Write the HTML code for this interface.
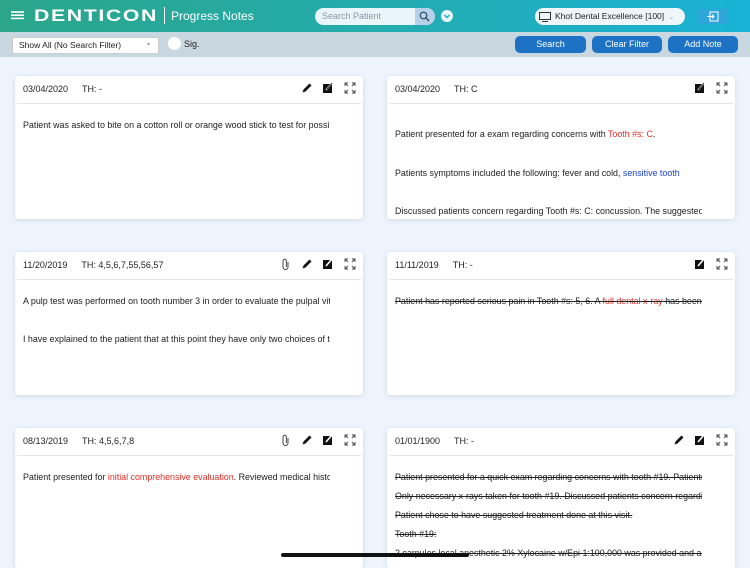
<!DOCTYPE html>
<html><head><meta charset="utf-8"><style>
*{box-sizing:border-box;margin:0;padding:0}
body{width:750px;height:562px;overflow:hidden;background:#eef4fc;font-family:"Liberation Sans",sans-serif;position:relative;color:#222}
.hdr{position:absolute;left:0;top:0;width:750px;height:32px;background:linear-gradient(90deg,#2ba68a 0%,#25aaa6 40%,#1ab2d6 100%)}
.tb{position:absolute;left:0;top:32px;width:750px;height:25px;background:#c9d7e0}
.abs{position:absolute}
.btn{position:absolute;top:36px;height:17px;background:#1d72c4;color:#fff;font-size:9px;border-radius:5px;text-align:center;line-height:17px}
.card{position:absolute;width:348px;height:143px;background:#fff;border-radius:3px;box-shadow:0 1px 4px rgba(120,140,170,.25);overflow:hidden}
.ch{position:absolute;left:8px;top:8px;font-size:9px;color:#222}
.ch span{margin-left:14px}
.dv{position:absolute;left:2px;right:2px;top:27px;height:1px;background:#e2e6ea}
.ic{position:absolute;top:6px}
.tx{position:absolute;left:8px;width:307px;font-size:8.9px;white-space:nowrap;overflow:hidden;color:#222}
.r{color:#e0302a}.b{color:#1a3fd0}.s{text-decoration:line-through}
</style></head><body>
<div class="hdr"></div>
<div class="abs" style="left:11px;top:11px;width:13px;height:2px;background:#fff;box-shadow:0 4px 0 #fff,0 8px 0 #fff;transform:scaleY(.8)"></div>
<div class="abs" style="left:34px;top:6px;color:#fff;font-size:17px;font-weight:bold;letter-spacing:1.3px;transform:scaleX(1.25);transform-origin:0 0">DENTICON</div>
<div class="abs" style="left:164px;top:7px;width:1px;height:17px;background:#fff"></div>
<div class="abs" style="left:171px;top:9px;color:#fff;font-size:12px">Progress Notes</div>
<div class="abs" style="left:315px;top:8px;width:120px;height:17px;background:#e9f5fb;border-radius:9px;font-size:9px;color:#8a98a6;line-height:17px;padding-left:7px">Search Patient</div>
<div class="abs" style="left:415px;top:8px;width:20px;height:17px;background:#b8cfe8;border-radius:0 9px 9px 0"></div>
<svg class="abs" style="left:419px;top:11px" width="11" height="11" viewBox="0 0 11 11"><circle cx="4.5" cy="4.5" r="3.3" fill="none" stroke="#2a4a6a" stroke-width="1.2"/><path d="M7 7l3 3" stroke="#2a4a6a" stroke-width="1.3"/></svg>
<div class="abs" style="left:441px;top:10px;width:12px;height:12px;border-radius:50%;background:#e8f4fb"></div>
<svg class="abs" style="left:443px;top:12px" width="8" height="8"><path d="M1.5 3l2.5 2.5L6.5 3" stroke="#1ab0cc" stroke-width="1.4" fill="none"/></svg>
<div class="abs" style="left:535px;top:8px;width:150px;height:17px;background:#eef6fa;border-radius:9px;font-size:8.5px;line-height:17px;padding-left:20px;color:#222">Khot Dental Excellence [100]</div>
<svg class="abs" style="left:539px;top:12px" width="12" height="10"><rect x="0.5" y="0.5" width="11" height="7" fill="none" stroke="#333"/><path d="M3 9.5h6" stroke="#333"/></svg>
<div class="abs" style="left:669px;top:14px;font-size:6px;color:#888">⌄</div>
<div class="abs" style="left:698px;top:9px;width:30px;height:15px;background:#2fa6da;border-radius:2px"></div>
<svg class="abs" style="left:707px;top:11px" width="12" height="11"><rect x="3" y="1" width="8" height="9" fill="none" stroke="#fff"/><path d="M0 5.5h7M5 3.5l2 2-2 2" stroke="#fff" fill="none"/></svg>
<div class="tb"></div>
<div class="abs" style="left:12px;top:37px;width:147px;height:17px;background:#fff;border:1px solid #ccc;font-size:8.5px;line-height:15px;padding-left:6px">Show All (No Search Filter)</div>
<div class="abs" style="left:147px;top:41px;font-size:6px;color:#999">▾</div>
<div class="abs" style="left:168px;top:37px;width:13px;height:13px;border-radius:50%;background:#fff"></div>
<div class="abs" style="left:184px;top:39px;font-size:9px">Sig.</div>
<div class="btn" style="left:515px;width:71px">Search</div>
<div class="btn" style="left:592px;width:70px">Clear Filter</div>
<div class="btn" style="left:668px;width:70px">Add Note</div>

<div class="card" style="left:15px;top:76px">
<div class="ch">03/04/2020<span>TH: -</span></div>
<svg class="ic" style="left:286px" width="12" height="12"><path d="M1.5 10.5l1-3 6-6 2 2-6 6z" fill="#111"/></svg>
<svg class="ic" style="left:307px" width="12" height="12"><rect x="1" y="2" width="9" height="9" fill="#111"/><path d="M4 8l6-7" stroke="#fff" stroke-width="1.6"/><path d="M4.5 7.5l5.5-6.5" stroke="#111" stroke-width=".8"/></svg>
<svg class="ic" style="left:329px" width="12" height="12"><path d="M1 4V1h3M8 1h3v3M11 8v3H8M4 11H1V8M1 1l3 3M11 1L8 4M11 11L8 8M1 11l3-3" stroke="#444" fill="none" stroke-width=".9"/></svg>
<div class="dv"></div>
<div class="tx" style="top:44px">Patient was asked to bite on a cotton roll or orange wood stick to test for possible cracked tooth</div>
</div>

<div class="card" style="left:387px;top:76px">
<div class="ch">03/04/2020<span>TH: C</span></div>
<svg class="ic" style="left:307px" width="12" height="12"><rect x="1" y="2" width="9" height="9" fill="#111"/><path d="M4 8l6-7" stroke="#fff" stroke-width="1.6"/><path d="M4.5 7.5l5.5-6.5" stroke="#111" stroke-width=".8"/></svg>
<svg class="ic" style="left:329px" width="12" height="12"><path d="M1 4V1h3M8 1h3v3M11 8v3H8M4 11H1V8M1 1l3 3M11 1L8 4M11 11L8 8M1 11l3-3" stroke="#444" fill="none" stroke-width=".9"/></svg>
<div class="dv"></div>
<div class="tx" style="top:53px">Patient presented for a exam regarding concerns with <span class="r">Tooth #s: C</span>.</div>
<div class="tx" style="top:92px">Patients symptoms included the following: fever and cold, <span class="b">sensitive tooth</span></div>
<div class="tx" style="top:130px">Discussed patients concern regarding Tooth #s: C: concussion. The suggested treatment</div>
</div>

<div class="card" style="left:15px;top:252px">
<div class="ch">11/20/2019<span>TH: 4,5,6,7,55,56,57</span></div>
<svg class="ic" style="left:265px" width="12" height="12"><path d="M8 4v5a2.5 2.5 0 0 1-5 0V3a1.7 1.7 0 0 1 3.4 0v6" stroke="#444" fill="none"/></svg>
<svg class="ic" style="left:286px" width="12" height="12"><path d="M1.5 10.5l1-3 6-6 2 2-6 6z" fill="#111"/></svg>
<svg class="ic" style="left:307px" width="12" height="12"><rect x="1" y="2" width="9" height="9" fill="#111"/><path d="M4 8l6-7" stroke="#fff" stroke-width="1.6"/></svg>
<svg class="ic" style="left:329px" width="12" height="12"><path d="M1 4V1h3M8 1h3v3M11 8v3H8M4 11H1V8M1 1l3 3M11 1L8 4M11 11L8 8M1 11l3-3" stroke="#444" fill="none" stroke-width=".9"/></svg>
<div class="dv"></div>
<div class="tx" style="top:44px">A pulp test was performed on tooth number 3 in order to evaluate the pulpal vitality</div>
<div class="tx" style="top:82px">I have explained to the patient that at this point they have only two choices of treatment</div>
</div>

<div class="card" style="left:387px;top:252px">
<div class="ch">11/11/2019<span>TH: -</span></div>
<svg class="ic" style="left:307px" width="12" height="12"><rect x="1" y="2" width="9" height="9" fill="#111"/><path d="M4 8l6-7" stroke="#fff" stroke-width="1.6"/></svg>
<svg class="ic" style="left:329px" width="12" height="12"><path d="M1 4V1h3M8 1h3v3M11 8v3H8M4 11H1V8M1 1l3 3M11 1L8 4M11 11L8 8M1 11l3-3" stroke="#444" fill="none" stroke-width=".9"/></svg>
<div class="dv"></div>
<div class="tx s" style="top:44px">Patient has reported serious pain in Tooth #s: 5, 6. A <span class="r">full dental x-ray</span> has been ordered</div>
</div>

<div class="card" style="left:15px;top:428px;height:140px">
<div class="ch">08/13/2019<span>TH: 4,5,6,7,8</span></div>
<svg class="ic" style="left:265px" width="12" height="12"><path d="M8 4v5a2.5 2.5 0 0 1-5 0V3a1.7 1.7 0 0 1 3.4 0v6" stroke="#444" fill="none"/></svg>
<svg class="ic" style="left:286px" width="12" height="12"><path d="M1.5 10.5l1-3 6-6 2 2-6 6z" fill="#111"/></svg>
<svg class="ic" style="left:307px" width="12" height="12"><rect x="1" y="2" width="9" height="9" fill="#111"/><path d="M4 8l6-7" stroke="#fff" stroke-width="1.6"/></svg>
<svg class="ic" style="left:329px" width="12" height="12"><path d="M1 4V1h3M8 1h3v3M11 8v3H8M4 11H1V8M1 1l3 3M11 1L8 4M11 11L8 8M1 11l3-3" stroke="#444" fill="none" stroke-width=".9"/></svg>
<div class="dv"></div>
<div class="tx" style="top:44px">Patient presented for <span class="r">initial comprehensive evaluation</span>. Reviewed medical history</div>
</div>

<div class="card" style="left:387px;top:428px;height:140px">
<div class="ch">01/01/1900<span>TH: -</span></div>
<svg class="ic" style="left:286px" width="12" height="12"><path d="M1.5 10.5l1-3 6-6 2 2-6 6z" fill="#111"/></svg>
<svg class="ic" style="left:307px" width="12" height="12"><rect x="1" y="2" width="9" height="9" fill="#111"/><path d="M4 8l6-7" stroke="#fff" stroke-width="1.6"/></svg>
<svg class="ic" style="left:329px" width="12" height="12"><path d="M1 4V1h3M8 1h3v3M11 8v3H8M4 11H1V8M1 1l3 3M11 1L8 4M11 11L8 8M1 11l3-3" stroke="#444" fill="none" stroke-width=".9"/></svg>
<div class="dv"></div>
<div class="tx s" style="top:44px">Patient presented for a quick exam regarding concerns with tooth #19. Patients symptoms</div>
<div class="tx s" style="top:63px">Only necessary x-rays taken for tooth #19. Discussed patients concern regarding tooth</div>
<div class="tx s" style="top:82px">Patient chose to have suggested treatment done at this visit.</div>
<div class="tx s" style="top:101px">Tooth #19:</div>
<div class="tx s" style="top:120px">2 carpules local anesthetic 2% Xylocaine w/Epi 1:100,000 was provided and a then</div>
</div>
<div class="abs" style="left:281px;top:553px;width:188px;height:4px;border-radius:2px;background:#111"></div>
</body></html>
